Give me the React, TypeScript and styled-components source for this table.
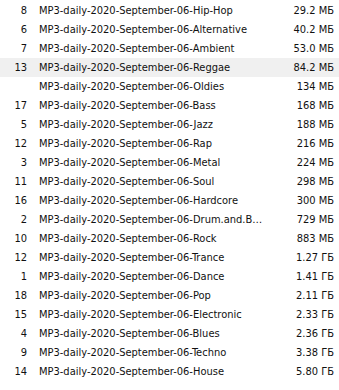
import styled, { createGlobalStyle } from 'styled-components';

const GlobalStyle = createGlobalStyle`
  html, body {
    margin: 0;
    padding: 0;
    background: #ffffff;
  }
  body {
    font-family: "DejaVu Sans Condensed", "DejaVu Sans", "Liberation Sans", sans-serif;
  }
`;

const List = styled.div`
  width: 339px;
  height: 390px;
  padding-top: 1px;
  box-sizing: border-box;
  background: #ffffff;
  overflow: hidden;
`;

const Row = styled.div<{ $selected?: boolean }>`
  display: grid;
  grid-template-columns: 27px 240px 67px;
  height: 19px;
  align-items: center;
  background: ${({ $selected }) => ($selected ? '#f0f0f0' : 'transparent')};
  font-size: 11px;
  color: #111111;
  white-space: nowrap;
`;

const Num = styled.span`
  text-align: right;
`;

const Name = styled.span`
  padding-left: 12px;
  overflow: hidden;
  text-overflow: ellipsis;
`;

const Size = styled.span`
  text-align: right;
`;

const tracks: [string, string, string][] = [
  ['8', 'Hip-Hop', '29.2 МБ'],
  ['6', 'Alternative', '40.2 МБ'],
  ['7', 'Ambient', '53.0 МБ'],
  ['13', 'Reggae', '84.2 МБ'],
  ['', 'Oldies', '134 МБ'],
  ['17', 'Bass', '168 МБ'],
  ['5', 'Jazz', '188 МБ'],
  ['12', 'Rap', '216 МБ'],
  ['3', 'Metal', '224 МБ'],
  ['11', 'Soul', '298 МБ'],
  ['16', 'Hardcore', '300 МБ'],
  ['2', 'Drum.and.Bass', '729 МБ'],
  ['10', 'Rock', '883 МБ'],
  ['12', 'Trance', '1.27 ГБ'],
  ['1', 'Dance', '1.41 ГБ'],
  ['18', 'Pop', '2.11 ГБ'],
  ['15', 'Electronic', '2.33 ГБ'],
  ['4', 'Blues', '2.36 ГБ'],
  ['9', 'Techno', '3.38 ГБ'],
  ['14', 'House', '5.80 ГБ'],
];

const App = () => (
  <>
    <GlobalStyle />
    <List>
      {tracks.map(([num, genre, size], i) => (
        <Row key={i} $selected={i === 3}>
          <Num>{num}</Num>
          <Name>MP3-daily-2020-September-06-{genre}</Name>
          <Size>{size}</Size>
        </Row>
      ))}
    </List>
  </>
);

export default App;
